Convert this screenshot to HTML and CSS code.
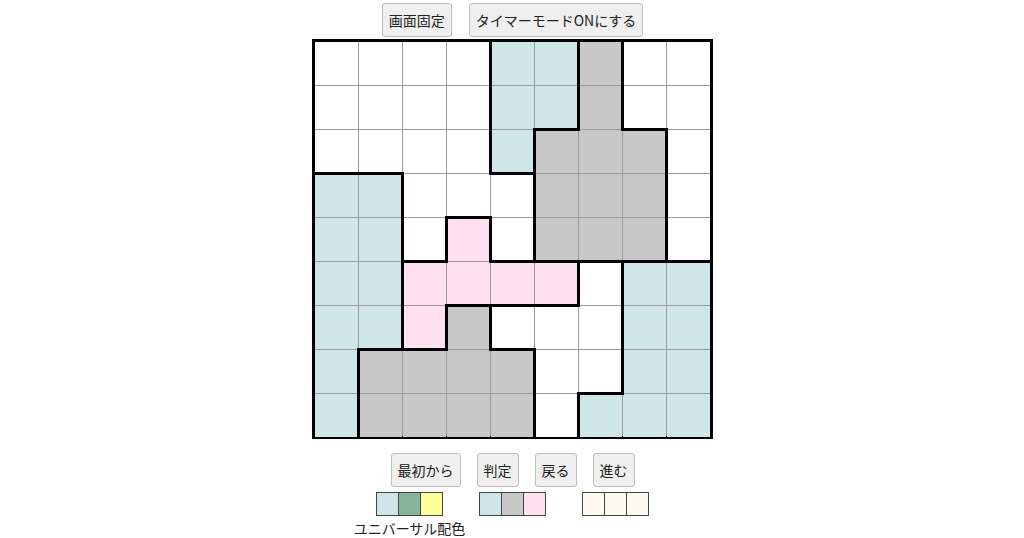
FILE: index.html
```html
<!DOCTYPE html>
<html lang="ja">
<head>
<meta charset="utf-8">
<title>パズル</title>
<link rel="stylesheet" href="styles.css">
</head>
<body>
<div class="page">
  <div class="toolbar top">
    <button class="btn">画面固定</button>
    <button class="btn">タイマーモードONにする</button>
  </div>
  <div class="board">
    <div class="c"></div><div class="c"></div><div class="c"></div><div class="c r"></div><div class="c bl"></div><div class="c bl r"></div><div class="c gy r"></div><div class="c"></div><div class="c"></div>
    <div class="c"></div><div class="c"></div><div class="c"></div><div class="c r"></div><div class="c bl"></div><div class="c bl r b"></div><div class="c gy r"></div><div class="c b"></div><div class="c"></div>
    <div class="c b"></div><div class="c b"></div><div class="c"></div><div class="c r"></div><div class="c bl r b"></div><div class="c gy"></div><div class="c gy"></div><div class="c gy r"></div><div class="c"></div>
    <div class="c bl"></div><div class="c bl r"></div><div class="c"></div><div class="c b"></div><div class="c r"></div><div class="c gy"></div><div class="c gy"></div><div class="c gy r"></div><div class="c"></div>
    <div class="c bl"></div><div class="c bl r"></div><div class="c r b"></div><div class="c pk r"></div><div class="c r b"></div><div class="c gy b"></div><div class="c gy b"></div><div class="c gy r b"></div><div class="c b"></div>
    <div class="c bl"></div><div class="c bl r"></div><div class="c pk"></div><div class="c pk b"></div><div class="c pk b"></div><div class="c pk r b"></div><div class="c r"></div><div class="c bl"></div><div class="c bl"></div>
    <div class="c bl"></div><div class="c bl r b"></div><div class="c pk r b"></div><div class="c gy r"></div><div class="c b"></div><div class="c"></div><div class="c r"></div><div class="c bl"></div><div class="c bl"></div>
    <div class="c bl r"></div><div class="c gy"></div><div class="c gy"></div><div class="c gy"></div><div class="c gy r"></div><div class="c"></div><div class="c r b"></div><div class="c bl"></div><div class="c bl"></div>
    <div class="c bl r"></div><div class="c gy"></div><div class="c gy"></div><div class="c gy"></div><div class="c gy r"></div><div class="c r"></div><div class="c bl"></div><div class="c bl"></div><div class="c bl"></div>
  </div>
  <div class="toolbar bottom">
    <button class="btn">最初から</button>
    <button class="btn">判定</button>
    <button class="btn">戻る</button>
    <button class="btn">進む</button>
  </div>
  <div class="palettes">
    <div class="palette">
      <div class="swatches">
        <span class="sw sw-blue"></span><span class="sw sw-green"></span><span class="sw sw-yellow"></span>
      </div>
      <div class="palette-label">ユニバーサル配色</div>
    </div>
    <div class="palette">
      <div class="swatches">
        <span class="sw sw-blue"></span><span class="sw sw-gray"></span><span class="sw sw-pink"></span>
      </div>
    </div>
    <div class="palette">
      <div class="swatches">
        <span class="sw sw-cream"></span><span class="sw sw-cream"></span><span class="sw sw-cream"></span>
      </div>
    </div>
  </div>
</div>
</body>
</html>
```
FILE: styles.css
```css
* { box-sizing: border-box; }
html, body { margin: 0; padding: 0; background: #fff; }
body {
  font-family: "Noto Sans CJK JP", "Noto Sans", sans-serif;
  color: #222;
}
.page {
  display: flex;
  flex-direction: column;
  align-items: center;
  padding-top: 3px;
  padding-left: 1px;
}
.toolbar {
  display: flex;
  justify-content: center;
  gap: 16px;
}
.toolbar.top { margin-bottom: 2px; gap: 17px; }
.toolbar.bottom { margin-top: 14px; }
.btn {
  height: 34px;
  padding: 0 6px;
  font-family: inherit;
  font-size: 14px;
  line-height: 1;
  color: #222;
  background: #efefef;
  border: 1px solid #bdbdbd;
  border-radius: 3px;
}
.board {
  display: grid;
  grid-template-columns: repeat(9, 43px);
  grid-template-rows: repeat(9, 43px);
  gap: 1px;
  background: #9a9a9a;
  border: 3px solid #000;
  width: 401px;
  height: 400px;
}
.c { position: relative; background: #fff; }
.c.bl { background: #cfe6e8; }
.c.gy { background: #c8c8c8; }
.c.pk { background: #fee0f1; }
.c.r::after, .c.b::after {
  content: "";
  position: absolute;
  top: -2px; left: -2px; right: -2px; bottom: -2px;
  z-index: 1;
}
.c.r::after { border-right: 3px solid #000; }
.c.b::after { border-bottom: 3px solid #000; }
.palettes {
  display: flex;
  justify-content: center;
  gap: 35px;
  margin-top: 5px;
}
.palette {
  display: flex;
  flex-direction: column;
  align-items: center;
  width: 68px;
}
.swatches { display: flex; }
.sw {
  display: block;
  width: 23px;
  height: 24px;
  border: 1px solid #444;
}
.sw + .sw { margin-left: -1px; }
.sw-blue { background: #cfe6e8; }
.sw-green { background: #86b59c; }
.sw-yellow { background: #ffff99; }
.sw-gray { background: #c8c8c8; }
.sw-pink { background: #fee0f1; }
.sw-cream { background: #fffaee; }
.palette-label {
  white-space: nowrap;
  font-size: 14px;
  line-height: 20px;
  margin-top: 2px;
  color: #222;
}
```
